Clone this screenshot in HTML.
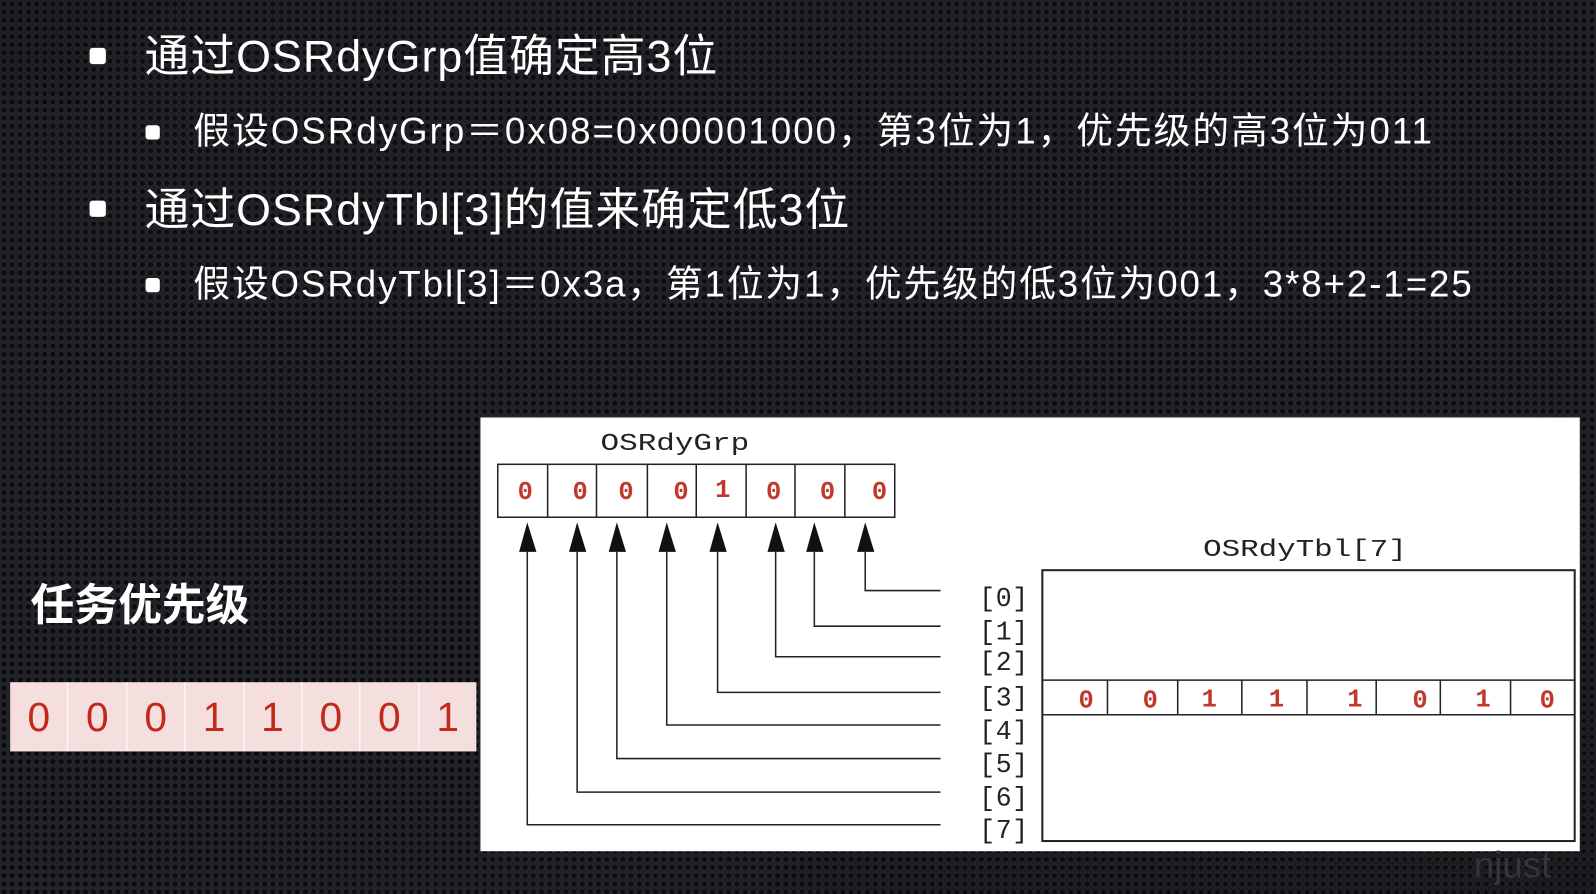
<!DOCTYPE html>
<html><head><meta charset="utf-8"><style>
html,body{margin:0;padding:0;width:1596px;height:894px;overflow:hidden;background:#141315;}
#w{position:absolute;left:0;top:0;width:1568px;height:878px;transform:scale(1.0179,1.0182);transform-origin:0 0;
background-color:#17161a;
background-image:radial-gradient(circle at 50% 50%, #0c0b0d 2.2px, #2c2c33 3px, transparent 3.6px),linear-gradient(160deg,#1e1d22,#222329 60%,#19181b);
background-size:8px 8px,100% 100%;}
.t{position:absolute;color:#fff;font-family:"Liberation Sans","Noto Sans CJK SC",sans-serif;white-space:nowrap;}
.b{position:absolute;width:16px;height:16px;background:#fff;border-radius:3px;}
.pink{position:absolute;left:10px;top:670px;width:458px;height:68px;background:#f4dede;display:flex;}
.pink div{flex:1;border-right:1px solid #fff;color:#c2281c;font:40px "Liberation Sans",sans-serif;text-align:center;line-height:70px;}
</style></head><body><div id="w">
<div class="b" style="left:88px;top:47px"></div>
<div class="t" style="left:142px;top:19px;font-size:44px;letter-spacing:1px">通过OSRdyGrp值确定高3位</div>
<div class="b" style="left:143px;top:123px;width:14px;height:14px"></div>
<div class="t" style="left:190px;top:100px;font-size:36px;letter-spacing:2px">假设OSRdyGrp＝0x08=0x00001000，第3位为1，优先级的高3位为011</div>
<div class="b" style="left:88px;top:197px"></div>
<div class="t" style="left:142px;top:170px;font-size:44px;letter-spacing:1px">通过OSRdyTbl[3]的值来确定低3位</div>
<div class="b" style="left:143px;top:273px;width:14px;height:14px"></div>
<div class="t" style="left:190px;top:250px;font-size:36px;letter-spacing:1.9px">假设OSRdyTbl[3]＝0x3a，第1位为1，优先级的低3位为001，3*8+2-1=25</div>
<div class="t" style="left:30px;top:560px;font-size:43px;font-weight:bold">任务优先级</div>
<div class="pink"><div>0</div><div>0</div><div>0</div><div>1</div><div>1</div><div>0</div><div>0</div><div style="border:none">1</div></div>
<svg style="position:absolute;left:0;top:0" width="1568" height="878" font-family="Liberation Mono,monospace">
<rect x="472" y="410" width="1080" height="426" fill="#fff"/>
<text x="590" y="442" font-size="24" fill="#222" textLength="146" lengthAdjust="spacingAndGlyphs">OSRdyGrp</text>
<g stroke="#222" stroke-width="1.5" fill="none">
<rect x="489" y="456" width="390" height="52"/>
<path d="M538 456V508M586 456V508M636 456V508M684 456V508M733 456V508M781 456V508M830 456V508"/>
<path d="M518 542V810H924M567 542V778H924M606 542V745H924M655 542V712H924M705 542V680H924M762 542V645H924M800 542V615H924M850 542V580H924"/>
<rect x="1024" y="560" width="523" height="266" stroke-width="2"/>
<path d="M1024 668H1547M1024 702H1547M1088 668V702M1157 668V702M1220 668V702M1284 668V702M1352 668V702M1415 668V702M1484 668V702"/>
</g>
<g fill="#111"><path d="M510 542L518 513L527 542ZM559 542L567 513L576 542ZM598 542L606 513L615 542ZM647 542L655 513L664 542ZM697 542L705 513L714 542ZM754 542L762 513L771 542ZM792 542L800 513L809 542ZM842 542L850 513L859 542Z"/></g>
<g fill="#c0392b" font-size="25" font-weight="bold" text-anchor="middle">
<text x="516" y="490">0</text><text x="570" y="490">0</text><text x="615" y="490">0</text><text x="669" y="490">0</text><text x="710" y="488">1</text><text x="760" y="490">0</text><text x="813" y="490">0</text><text x="864" y="490">0</text>
<text x="1067" y="695">0</text><text x="1130" y="695">0</text><text x="1188" y="694">1</text><text x="1254" y="694">1</text><text x="1331" y="694">1</text><text x="1395" y="695">0</text><text x="1457" y="694">1</text><text x="1520" y="695">0</text>
</g>
<g fill="#222" font-size="26"><text x="962" y="595" textLength="48">[0]</text><text x="962" y="628" textLength="48">[1]</text><text x="962" y="658" textLength="48">[2]</text><text x="962" y="693" textLength="48">[3]</text><text x="962" y="726" textLength="48">[4]</text><text x="962" y="758" textLength="48">[5]</text><text x="962" y="791" textLength="48">[6]</text><text x="962" y="823" textLength="48">[7]</text></g>
<text x="1182" y="546" font-size="24" fill="#222" textLength="200" lengthAdjust="spacingAndGlyphs">OSRdyTbl[7]</text>
<text x="1448" y="862" font-size="36" fill="#34343a" font-family="Liberation Sans,sans-serif">njust</text>
</svg>
</div></body></html>
